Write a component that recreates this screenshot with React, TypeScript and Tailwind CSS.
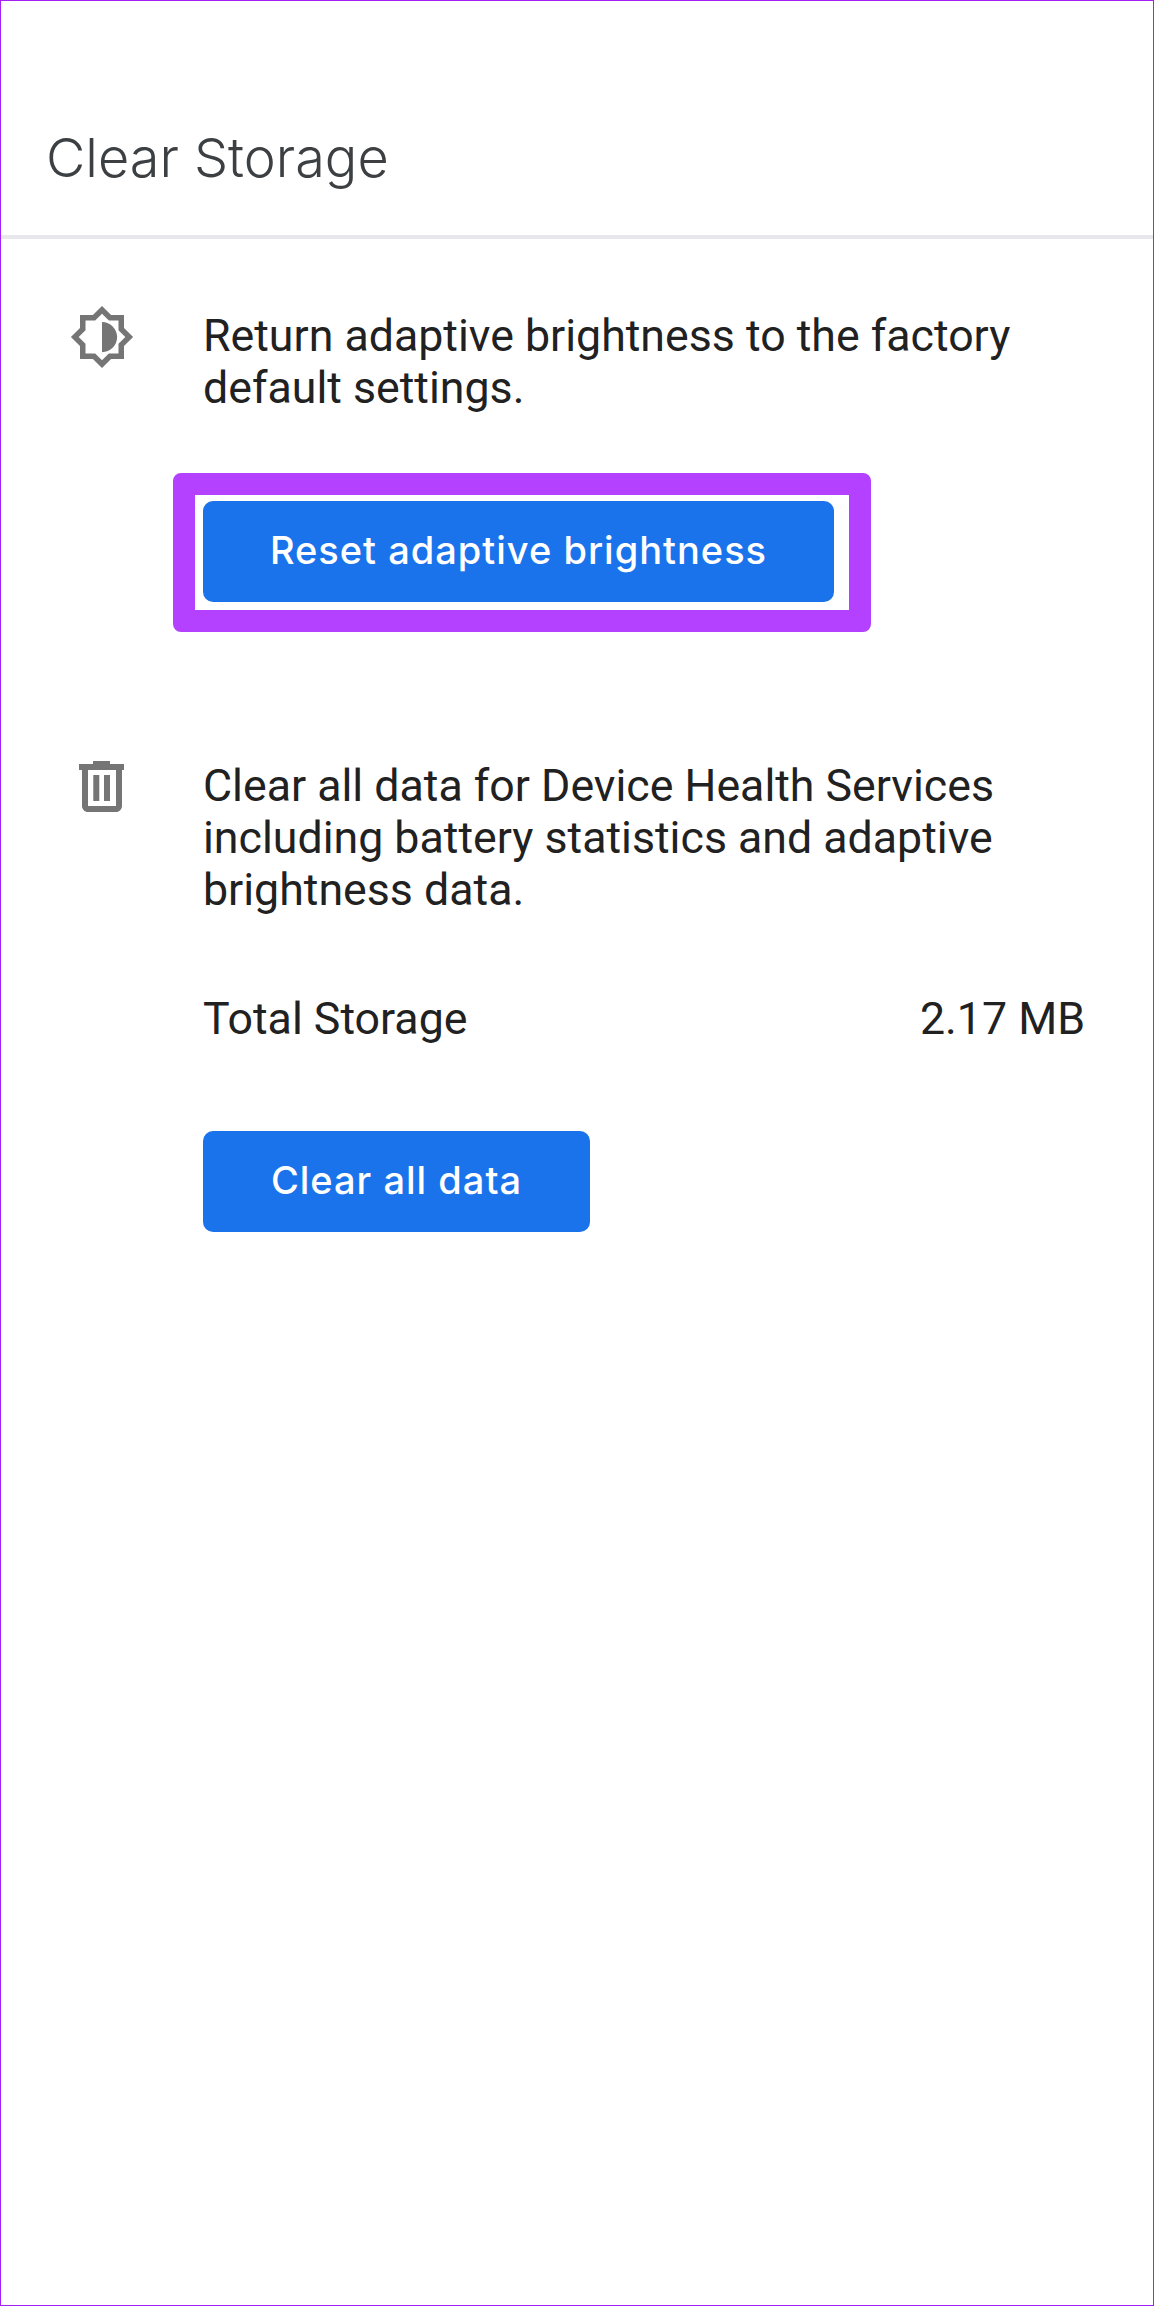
import React from 'react';

const BrightnessIcon = () => (
    <svg viewBox="0 0 24 24" className="w-[66px] h-[66px] fill-[#757575]">
        <path d="M20 15.31L23.31 12 20 8.69V4h-4.69L12 .69 8.69 4H4v4.69L.69 12 4 15.31V20h4.69L12 23.31 15.31 20H20v-4.69zM18 14.48V18h-3.52L12 20.48 9.52 18H6v-3.52L3.52 12 6 9.52V6h3.52L12 3.52 14.52 6H18v3.52L20.48 12 18 14.48zM12 6.5v11c3.03 0 5.5-2.47 5.5-5.5S15.03 6.5 12 6.5z" />
    </svg>
);

const TrashIcon = () => (
    <svg viewBox="0 0 45 51" className="w-[45px] h-[51px] fill-[#757575]">
        <path d="M14 0h17v3H45v6H0V3h14z" />
        <path fillRule="evenodd" d="M3 9h6v36h28V9h6v36c0 3.3-2.7 6-6 6H9c-3.3 0-6-2.7-6-6z" />
        <path d="M14.3 14h6v26h-6zM25 14h6v26h-6z" />
    </svg>
);

const BlueButton = ({ label, className }: { label: string; className: string }) => (
    <div className={`h-[101px] pb-[3px] flex items-center justify-center rounded-[10px] bg-[#1b73ec] text-white text-[38px] font-medium tracking-[1px] font-['Inter',sans-serif] ${className}`}>
        {label}
    </div>
);

export default function App() {
    return (
        <div className="w-[1154px] h-[2306px] bg-white border border-[#a61ff5] font-['Roboto',sans-serif] text-[44.7px] leading-[52px] text-[#212121] overflow-hidden">
            <header className="h-[238px] pl-[45px] pt-[122px] border-b-4 border-[#e8e8ec]">
                <h1 className="text-[54px] leading-[70px] font-[350] text-[#3c4043] font-['Inter',sans-serif]">Clear Storage</h1>
            </header>

            <section className="flex mt-[65px]">
                <div className="w-[202px] shrink-0 pl-[68px]">
                    <BrightnessIcon />
                </div>
                <div className="pt-[6px] w-[882px]">
                    <p>Return adaptive brightness to the factory<br />default settings.</p>
                    <div className="mt-[59px] -ml-[30px] w-[698px] border-[22px] border-[#b341ff] rounded-[8px] pl-[8px] pr-[15px] pt-[6px] pb-[8px]">
                        <BlueButton label="Reset adaptive brightness" className="w-full" />
                    </div>
                </div>
            </section>

            <section className="flex mt-[128px]">
                <div className="w-[202px] shrink-0 pl-[78px] pt-[1px]">
                    <TrashIcon />
                </div>
                <div className="w-[882px]">
                    <p>Clear all data for Device Health Services<br />including battery statistics and adaptive<br />brightness data.</p>
                    <div className="flex justify-between mt-[77px]">
                        <span>Total Storage</span>
                        <span>2.17 MB</span>
                    </div>
                    <BlueButton label="Clear all data" className="w-[387px] mt-[86px]" />
                </div>
            </section>
        </div>
    );
}
